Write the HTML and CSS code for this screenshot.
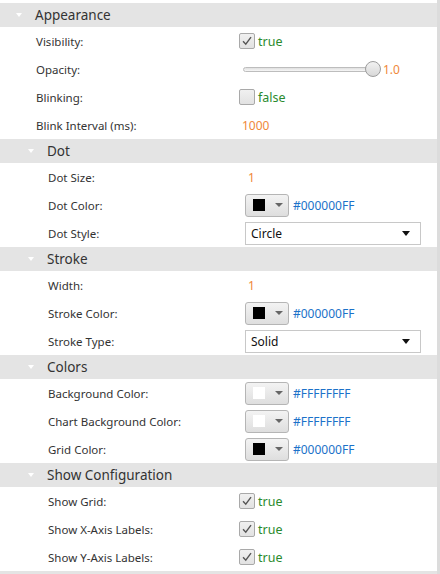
FILE: index.html
```html
<!DOCTYPE html>
<html>
<head>
<meta charset="utf-8">
<link rel="stylesheet" href="styles.css">
</head>
<body>
<div class="panel">
  <div class="header l1"><span class="tri"></span><span class="htext">Appearance</span></div>
  <div class="row l1"><span class="label">Visibility:</span><span class="value"><span class="cb checked"><svg viewBox="0 0 16 16"><path d="M3.5 8.2 L6.6 11.6 L12.6 3.6" fill="none" stroke="#555" stroke-width="1.6"/></svg></span><span class="bool">true</span></span></div>
  <div class="row l1"><span class="label">Opacity:</span><span class="value"><span class="slider"><span class="track"></span><span class="thumb"></span></span><span class="num">1.0</span></span></div>
  <div class="row l1"><span class="label">Blinking:</span><span class="value"><span class="cb"></span><span class="bool">false</span></span></div>
  <div class="row l1"><span class="label">Blink Interval (ms):</span><span class="value"><span class="num int">1000</span></span></div>

  <div class="header l2"><span class="tri"></span><span class="htext">Dot</span></div>
  <div class="row l2"><span class="label">Dot Size:</span><span class="value"><span class="num spin">1</span></span></div>
  <div class="row l2"><span class="label">Dot Color:</span><span class="value"><span class="cp"><span class="sw black"></span><span class="arr"></span></span><span class="hex">#000000FF</span></span></div>
  <div class="row l2"><span class="label">Dot Style:</span><span class="value"><span class="combo"><span>Circle</span><span class="carr"></span></span></span></div>

  <div class="header l2"><span class="tri"></span><span class="htext">Stroke</span></div>
  <div class="row l2"><span class="label">Width:</span><span class="value"><span class="num spin">1</span></span></div>
  <div class="row l2"><span class="label">Stroke Color:</span><span class="value"><span class="cp"><span class="sw black"></span><span class="arr"></span></span><span class="hex">#000000FF</span></span></div>
  <div class="row l2"><span class="label">Stroke Type:</span><span class="value"><span class="combo"><span>Solid</span><span class="carr"></span></span></span></div>

  <div class="header l2"><span class="tri"></span><span class="htext">Colors</span></div>
  <div class="row l2"><span class="label">Background Color:</span><span class="value"><span class="cp"><span class="sw white"></span><span class="arr"></span></span><span class="hex">#FFFFFFFF</span></span></div>
  <div class="row l2"><span class="label">Chart Background Color:</span><span class="value"><span class="cp"><span class="sw white"></span><span class="arr"></span></span><span class="hex">#FFFFFFFF</span></span></div>
  <div class="row l2"><span class="label">Grid Color:</span><span class="value"><span class="cp"><span class="sw black"></span><span class="arr"></span></span><span class="hex">#000000FF</span></span></div>

  <div class="header l2"><span class="tri"></span><span class="htext">Show Configuration</span></div>
  <div class="row l2"><span class="label">Show Grid:</span><span class="value"><span class="cb checked"><svg viewBox="0 0 16 16"><path d="M3.5 8.2 L6.6 11.6 L12.6 3.6" fill="none" stroke="#555" stroke-width="1.6"/></svg></span><span class="bool">true</span></span></div>
  <div class="row l2"><span class="label">Show X-Axis Labels:</span><span class="value"><span class="cb checked"><svg viewBox="0 0 16 16"><path d="M3.5 8.2 L6.6 11.6 L12.6 3.6" fill="none" stroke="#555" stroke-width="1.6"/></svg></span><span class="bool">true</span></span></div>
  <div class="row l2"><span class="label">Show Y-Axis Labels:</span><span class="value"><span class="cb checked"><svg viewBox="0 0 16 16"><path d="M3.5 8.2 L6.6 11.6 L12.6 3.6" fill="none" stroke="#555" stroke-width="1.6"/></svg></span><span class="bool">true</span></span></div>
  <div class="footer"></div>
</div>
</body>
</html>
```
FILE: styles.css
```css
html, body { margin: 0; padding: 0; background: #fff; }
body { font-family: "Noto Sans", "Open Sans", sans-serif; font-size: 11.5px; color: #333; }
.panel { width: 437px; height: 574px; border-right: 3px solid #dcdcdc; padding-top: 3px; box-sizing: content-box; }
.header { height: 24px; background: #e4e4e4; display: flex; align-items: center; font-size: 13.5px; color: #333; }
.header .tri { width: 0; height: 0; border-left: 3.5px solid transparent; border-right: 3.5px solid transparent; border-top: 4px solid #fff; margin-right: 13px; }
.header.l1 .tri { margin-left: 16px; }
.header.l2 .tri { margin-left: 28px; }
.row { height: 28px; display: grid; grid-template-columns: 240px 1fr; align-items: center; }
.row.l1 .label { padding-left: 36px; }
.row.l2 .label { padding-left: 48px; }
.value { display: flex; align-items: center; }
.cb { width: 14px; height: 14px; border: 1px solid #a9a9a9; border-radius: 2px; background: linear-gradient(#f0f0f0, #e2e2e2); margin-left: -1px; display: inline-flex; }
.cb svg { width: 14px; height: 14px; }
.bool { color: #2a8a2e; font-size: 12.5px; margin-left: 3px; }
.num { color: #f0883a; font-size: 12px; }
.int { margin-left: 2px; }
.spin { margin-left: 8px; }
.slider { position: relative; width: 138px; height: 16px; margin-left: 3px; display: inline-block; }
.track { position: absolute; left: 0; right: 6px; top: 6px; height: 3px; border: 1px solid #bdbdbd; border-radius: 3px; background: linear-gradient(#e0e0e0, #f6f6f6); }
.thumb { position: absolute; right: 0; top: 0; width: 14px; height: 14px; border: 1px solid #9c9c9c; border-radius: 50%; background: linear-gradient(#f2f2f2, #d8d8d8); }
.slider + .num { margin-left: 2px; }
.cp { width: 42px; height: 21px; border: 1px solid #b5b5b5; border-radius: 3px; background: linear-gradient(#f3f3f3, #dedede); margin-left: 5px; display: inline-flex; align-items: center; box-sizing: content-box; }
.sw { width: 12px; height: 12px; margin-left: 7px; }
.sw.black { background: #000; }
.sw.white { background: #fff; }
.arr { width: 0; height: 0; border-left: 4px solid transparent; border-right: 4px solid transparent; border-top: 4px solid #666; margin-left: 10px; }
.hex { color: #1b72c9; font-size: 12px; margin-left: 4px; }
.combo { border: 1px solid #c8c8c8; background: #fff; margin-left: 5px; display: flex; align-items: center; justify-content: space-between; padding: 0 10px 0 5px; box-sizing: border-box; width: 176px; height: 23px; color: #111; font-size: 12px; }
.carr { width: 0; height: 0; border-left: 4.5px solid transparent; border-right: 4.5px solid transparent; border-top: 5px solid #111; }
.footer { height: 3px; background: #e4e4e4; }
```
